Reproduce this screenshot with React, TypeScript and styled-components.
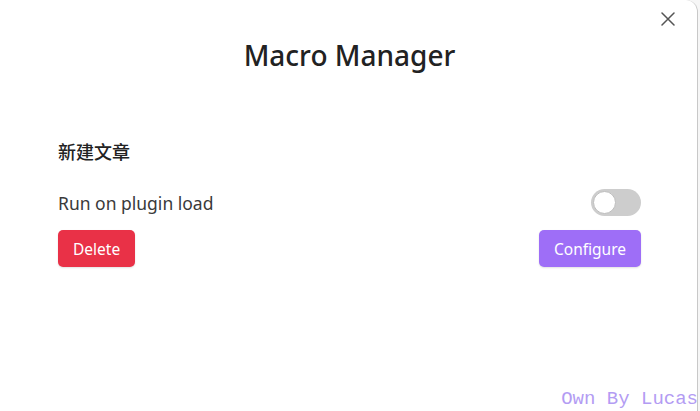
import React, { useState } from "react";
import styled, { createGlobalStyle } from "styled-components";

const GlobalStyle = createGlobalStyle`
  html, body {
    margin: 0;
    padding: 0;
    background: #f6f6f6;
  }
  body {
    font-family: "Noto Sans", "Noto Sans CJK SC", sans-serif;
  }
`;

function App() {
  const [onLoad, setOnLoad] = useState(false);

  return (
    <>
      <GlobalStyle />
      <Page>
        <Modal>
          <CloseButton aria-label="Close">
            <svg width="14" height="14" viewBox="0 0 14 14">
              <path d="M1 1 L13 13 M13 1 L1 13" stroke="#555" strokeWidth="1.5" strokeLinecap="round" />
            </svg>
          </CloseButton>
          <Title>Macro Manager</Title>
          <MacroList>
            <MacroItem>
              <MacroName>新建文章</MacroName>
              <SettingRow>
                <SettingLabel>Run on plugin load</SettingLabel>
                <Toggle $on={onLoad} onClick={() => setOnLoad(!onLoad)}>
                  <Knob $on={onLoad} />
                </Toggle>
              </SettingRow>
              <ButtonRow>
                <Button $variant="danger">Delete</Button>
                <Button $variant="accent">Configure</Button>
              </ButtonRow>
            </MacroItem>
          </MacroList>
        </Modal>
        <Watermark>Own By Lucas</Watermark>
      </Page>
    </>
  );
}

export default App;

const Page = styled.div`
  position: relative;
  width: 700px;
  height: 411px;
  overflow: hidden;
`;

const Modal = styled.div`
  position: relative;
  box-sizing: border-box;
  width: 698px;
  height: 440px;
  background: #fff;
  border-right: 1px solid #c8c8c8;
  border-radius: 0 12px 0 0;
  padding: 35px 56px 0 58px;
  display: flex;
  flex-direction: column;
`;

const CloseButton = styled.button`
  position: absolute;
  top: 9px;
  right: 19px;
  width: 20px;
  height: 20px;
  padding: 0;
  border: none;
  background: none;
  display: flex;
  align-items: center;
  justify-content: center;
  cursor: pointer;
`;

const Title = styled.h1`
  margin: 0;
  text-align: center;
  font-size: 28px;
  font-weight: 500;
  line-height: 40px;
  color: #222;
`;

const MacroList = styled.div`
  margin-top: 63px;
  display: flex;
  flex-direction: column;
`;

const MacroItem = styled.div`
  display: flex;
  flex-direction: column;
`;

const MacroName = styled.div`
  font-size: 18px;
  font-weight: 500;
  line-height: 28px;
  color: #222;
`;

const SettingRow = styled.div`
  margin-top: 23px;
  display: flex;
  align-items: center;
  justify-content: space-between;
`;

const SettingLabel = styled.div`
  font-size: 17.5px;
  color: #3a3a3a;
  line-height: 26px;
`;

const Toggle = styled.div<{ $on: boolean }>`
  position: relative;
  box-sizing: border-box;
  width: 50px;
  height: 27px;
  border-radius: 14px;
  background: ${(p) => (p.$on ? "#8a5cf5" : "#cdcdcd")};
  cursor: pointer;
`;

const Knob = styled.div<{ $on: boolean }>`
  position: absolute;
  top: 2px;
  left: ${(p) => (p.$on ? "25px" : "2px")};
  box-sizing: border-box;
  width: 23px;
  height: 23px;
  border-radius: 50%;
  background: #fff;
  border: 1px solid #bdbdbd;
`;

const ButtonRow = styled.div`
  margin-top: 14px;
  display: flex;
  justify-content: space-between;
`;

const Button = styled.button<{ $variant: "danger" | "accent" }>`
  height: 37px;
  padding: 0 15px;
  border: none;
  border-radius: 5px;
  font-family: "Noto Sans", sans-serif;
  font-size: 15.5px;
  color: #fff;
  background: ${(p) => (p.$variant === "danger" ? "#e93147" : "#9e6ef7")};
  box-shadow: 0 1px 2px rgba(0, 0, 0, 0.12);
  cursor: pointer;
`;

const Watermark = styled.div`
  position: absolute;
  right: 2px;
  bottom: 1px;
  font-family: "Liberation Mono", "DejaVu Sans Mono", monospace;
  font-size: 19px;
  line-height: 22px;
  color: #b39cf3;
`;
